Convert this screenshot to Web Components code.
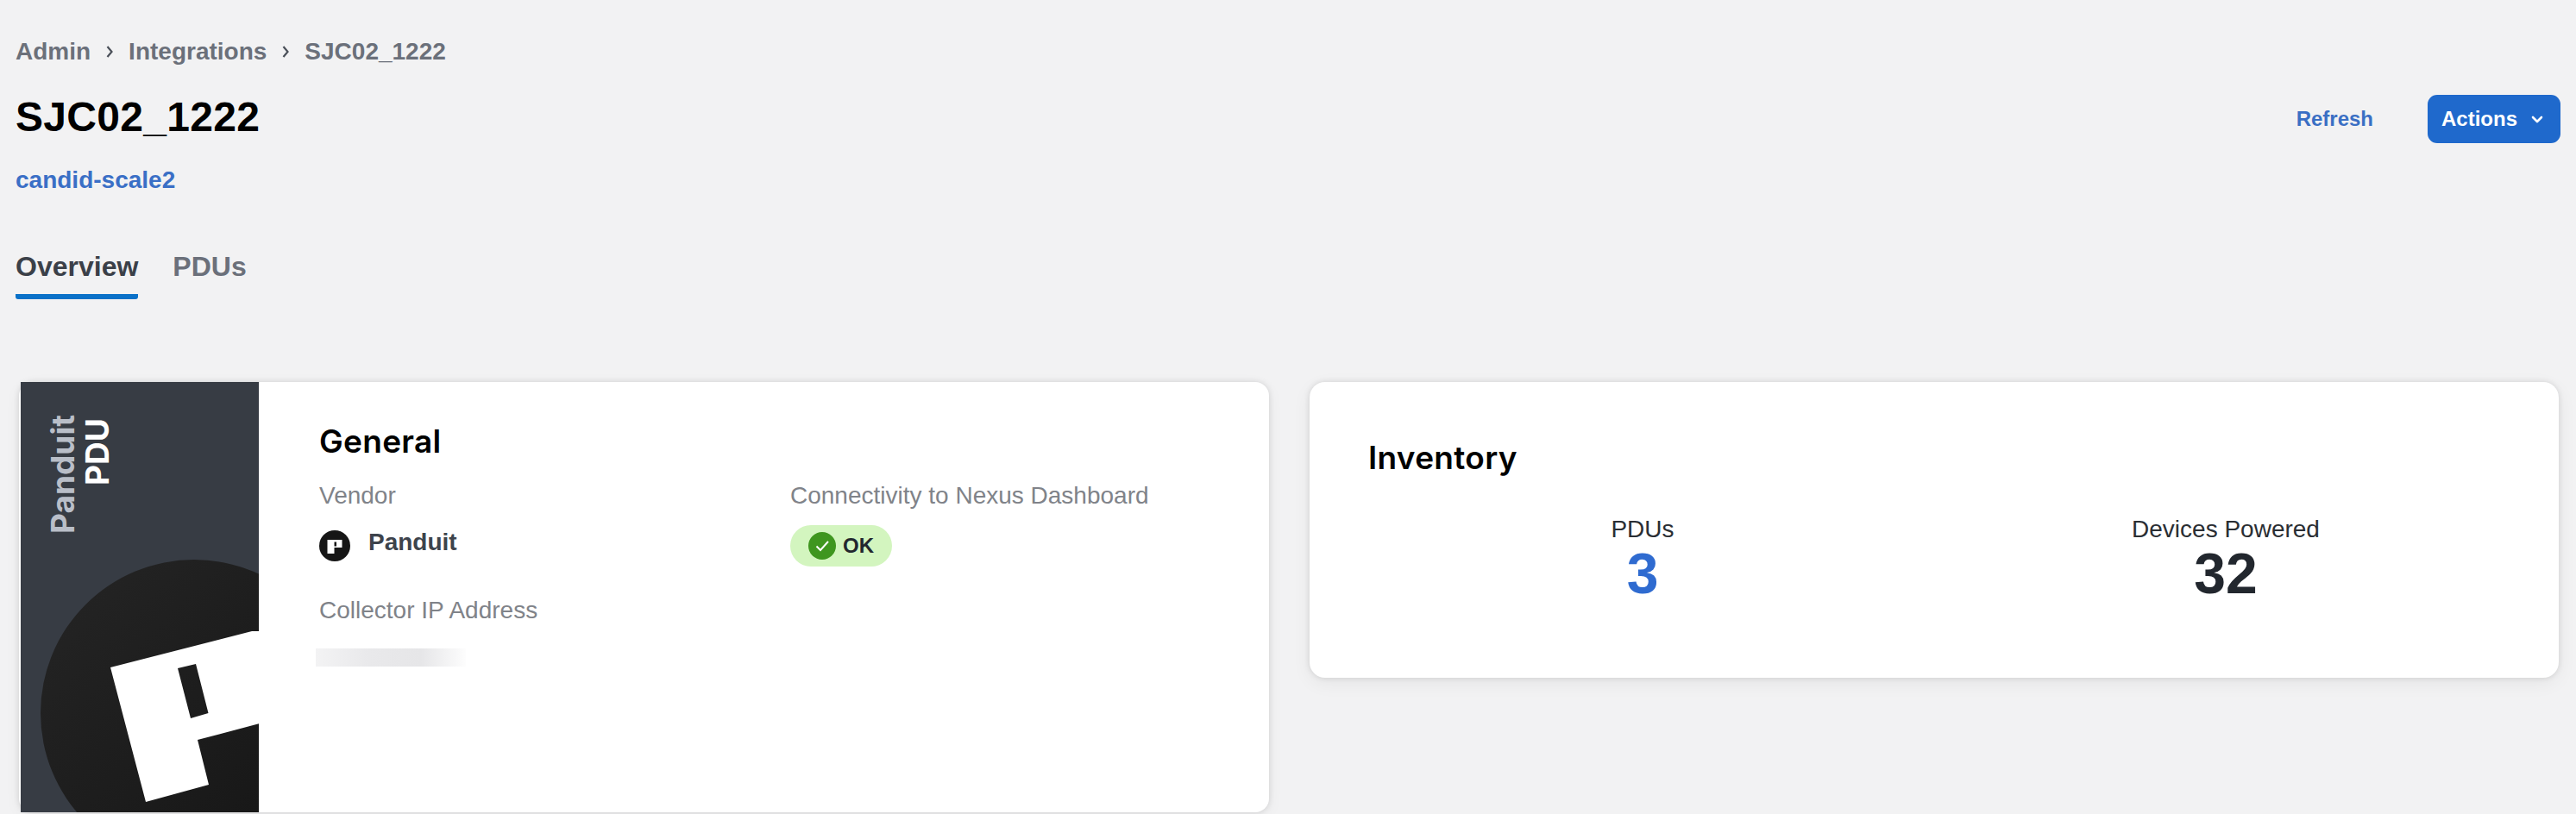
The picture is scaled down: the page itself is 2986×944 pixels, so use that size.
<!DOCTYPE html>
<html lang="en">
<head>
<meta charset="utf-8">
<title>SJC02_1222</title>
<style>
  html, body { margin: 0; background: #f2f2f3; }
  body { font-family: "Liberation Sans", Arial, sans-serif; overflow: hidden; }
</style>
</head>
<body>
<integration-page>
  <bread-crumbs slot="crumbs">
    <span>Admin</span>
    <span>Integrations</span>
    <span>SJC02_1222</span>
  </bread-crumbs>
  <page-header slot="header" heading="SJC02_1222" fabric="candid-scale2"></page-header>
  <tab-strip slot="tabs">
    <span class="active">Overview</span>
    <span>PDUs</span>
  </tab-strip>
  <general-card slot="left"></general-card>
  <inventory-card slot="right"></inventory-card>
</integration-page>

<script>
class IntegrationPage extends HTMLElement {
  connectedCallback() {
    this.attachShadow({ mode: 'open' });
    this.shadowRoot.innerHTML = `
      <style>
        :host {
          display: block;
          height: 944px;
          box-sizing: border-box;
          padding: 44px 18px 0;
          overflow: hidden;
        }
        .cards {
          display: grid;
          grid-template-columns: 1449px 1448px;
          gap: 47px;
          margin: 96px 0 0 4px;
          align-items: start;
        }
      </style>
      <slot name="crumbs"></slot>
      <slot name="header"></slot>
      <slot name="tabs"></slot>
      <div class="cards">
        <slot name="left"></slot>
        <slot name="right"></slot>
      </div>
    `;
  }
}

class BreadCrumbs extends HTMLElement {
  connectedCallback() {
    this.attachShadow({ mode: 'open' });
    const sep = `<svg width="8" height="14" viewBox="0 0 8 14" fill="none" stroke="#4b5059" stroke-width="2.2"><path d="M1.5 1l5 6-5 6"/></svg>`;
    // one separator between each pair of crumbs
    const parts = [...this.children].map((el, i) => {
      el.slot = 'c' + i;
      return `<slot name="c${i}"></slot>`;
    });
    this.shadowRoot.innerHTML = `
      <style>
        :host {
          display: flex;
          align-items: center;
          height: 32px;
          font: bold 28px/32px "Liberation Sans", Arial, sans-serif;
          color: #6b707a;
        }
        svg { margin: 0 18px; flex-shrink: 0; }
      </style>
      ${parts.join(sep)}
    `;
  }
}

class PageHeader extends HTMLElement {
  connectedCallback() {
    this.attachShadow({ mode: 'open' });
    this.shadowRoot.innerHTML = `
      <style>
        :host {
          display: flex;
          justify-content: space-between;
          align-items: flex-start;
          margin-top: 32px;
          font-family: "Liberation Sans", Arial, sans-serif;
        }
        h1 { margin: 0; font-size: 48px; line-height: 56px; font-weight: bold; letter-spacing: .3px; color: #000; }
        .fabric {
          display: block;
          margin-top: 29px;
          font-size: 28px;
          line-height: 32px;
          font-weight: bold;
          color: #3a6fc6;
        }
        .actions { display: flex; align-items: center; gap: 63px; margin-top: 2px; }
        .refresh { font-size: 24px; font-weight: bold; color: #3a6fc4; }
        button {
          display: flex;
          align-items: center;
          gap: 16px;
          width: 154px;
          height: 56px;
          padding: 0 0 0 16px;
          border: 0;
          border-radius: 11px;
          background: #1f69cc;
          color: #fff;
          font: bold 24px "Liberation Sans", Arial, sans-serif;
        }
      </style>
      <div>
        <h1>${this.getAttribute('heading')}</h1>
        <span class="fabric">${this.getAttribute('fabric')}</span>
      </div>
      <div class="actions">
        <span class="refresh">Refresh</span>
        <button>Actions
          <svg width="14" height="9" viewBox="0 0 14 9" fill="none" stroke="#fff" stroke-width="2.6" stroke-linecap="round" stroke-linejoin="round"><path d="M2 2l5 5 5-5"/></svg>
        </button>
      </div>
    `;
  }
}

class TabStrip extends HTMLElement {
  connectedCallback() {
    this.attachShadow({ mode: 'open' });
    const tabs = [...this.children].map((el, i) => {
      el.slot = 't' + i;
      const on = el.classList.contains('active') ? ' on' : '';
      return `<div class="tab${on}"><slot name="t${i}"></slot></div>`;
    });
    this.shadowRoot.innerHTML = `
      <style>
        :host {
          display: flex;
          gap: 40px;
          margin-top: 65px;
          font: bold 32px/38px "Liberation Sans", Arial, sans-serif;
          color: #6b707a;
        }
        .tab { height: 57px; box-sizing: border-box; }
        .on { color: #3b4048; border-bottom: 6px solid #0a71c8; border-radius: 3px; padding-bottom: 13px; }
      </style>
      ${tabs.join('')}
    `;
  }
}

class PanduitMark extends HTMLElement {
  connectedCallback() {
    this.attachShadow({ mode: 'open' });
    this.shadowRoot.innerHTML = `
      <style>
        :host { display: block; width: 36px; height: 36px; flex-shrink: 0; }
        svg { display: block; }
      </style>
      <svg width="36" height="36" viewBox="0 0 36 36">
        <circle cx="18" cy="18" r="18" fill="#161616"/>
        <path fill-rule="evenodd" fill="#fff" d="M9.5 11H26.5V20H17.5V27H9.5ZM17.5 13.5V18.5H20V13.5Z"/>
      </svg>
    `;
  }
}

class InfoField extends HTMLElement {
  connectedCallback() {
    this.attachShadow({ mode: 'open' });
    this.shadowRoot.innerHTML = `
      <style>
        :host { display: block; font-family: "Liberation Sans", Arial, sans-serif; }
        .label { font-size: 28px; line-height: 32px; color: #808389; }
      </style>
      <div class="label">${this.getAttribute('label')}</div>
      <slot></slot>
    `;
  }
}

class StatusPill extends HTMLElement {
  connectedCallback() {
    this.attachShadow({ mode: 'open' });
    this.shadowRoot.innerHTML = `
      <style>
        :host {
          display: inline-flex;
          align-items: center;
          gap: 8px;
          height: 48px;
          padding: 0 21px 0 21px;
          border-radius: 24px;
          background: #d3f5bf;
          color: #22272e;
          font: bold 24px "Liberation Sans", Arial, sans-serif;
        }
        svg { display: block; }
      </style>
      <svg width="32" height="32" viewBox="0 0 32 32">
        <circle cx="16" cy="16" r="16" fill="#3f961f"/>
        <path d="M9.5 16.5l4.5 4.5 9-10" fill="none" stroke="#fff" stroke-width="2"/>
      </svg>
      <slot></slot>
    `;
  }
}

class GeneralCard extends HTMLElement {
  connectedCallback() {
    this.attachShadow({ mode: 'open' });
    this.shadowRoot.innerHTML = `
      <style>
        :host {
          display: flex;
          height: 499px;
          box-sizing: border-box;
          padding-left: 2px;
          border-radius: 16px;
          background: #fff;
          box-shadow: 0 0 7px rgba(0,0,0,.12), 0 4px 18px rgba(0,0,0,.05);
          font-family: "Liberation Sans", Arial, sans-serif;
        }
        .panel {
          position: relative;
          flex: 0 0 276px;
          box-sizing: border-box;
          background: #373c44;
          overflow: hidden;
        }
        .panel svg { position: absolute; left: 0; top: 0; }
        .brand {
          position: absolute;
          left: 29px;
          top: 42px;
          height: 134px;
          writing-mode: vertical-rl;
          transform: rotate(180deg);
          text-align: end;
          font: 700 37px/40px Inter, sans-serif;
          color: #b9bec8;
        }
        .brand b { display: block; font-weight: 700; color: #fff; }
        .body { flex: 1; padding: 47px 0 0 70px; }
        h2 { margin: 0 0 25px; font: 600 37px/44px Inter, sans-serif; letter-spacing: .3px; color: #000; }
        .grid { display: grid; grid-template-columns: 546px 1fr; row-gap: 35px; }
        .vendor {
          display: flex;
          gap: 21px;
          margin-top: 22px;
          font-size: 28px;
          line-height: 32px;
          font-weight: bold;
          color: #3d434c;
        }
        .vendor panduit-mark { margin-top: 2px; }
        .pill { margin-top: 18px; }
        .masked {
          width: 174px;
          height: 21px;
          margin: 28px 0 0 -4px;
          background: linear-gradient(90deg, #f3f3f4, #e9e9eb 35%, #e6e6e8 70%, #fdfdfd);
        }
      </style>
      <div class="panel">
        <svg width="276" height="499" viewBox="24 443 276 499">
          <defs>
            <linearGradient id="disc" x1="0" y1="0" x2="1" y2="1">
              <stop offset="0" stop-color="#252525"/>
              <stop offset="1" stop-color="#141414"/>
            </linearGradient>
          </defs>
          <circle cx="225" cy="827" r="178" fill="url(#disc)"/>
          <path fill="#fff" fill-rule="evenodd" d="M128 774L292 732L320 732L320 834L229 858L242 910L169 930zM206 775L227 770L241.5 827L221 833z"/>
        </svg>
        <div class="brand">Panduit<b>PDU</b></div>
      </div>
      <div class="body">
        <h2>General</h2>
        <div class="grid">
          <info-field label="Vendor">
            <div class="vendor"><panduit-mark></panduit-mark><span>Panduit</span></div>
          </info-field>
          <info-field label="Connectivity to Nexus Dashboard">
            <div class="pill"><status-pill>OK</status-pill></div>
          </info-field>
          <info-field label="Collector IP Address">
            <div class="masked"></div>
          </info-field>
        </div>
      </div>
    `;
  }
}

class StatTile extends HTMLElement {
  connectedCallback() {
    this.attachShadow({ mode: 'open' });
    this.shadowRoot.innerHTML = `
      <style>
        :host {
          display: block;
          text-align: center;
          font-family: "Liberation Sans", Arial, sans-serif;
        }
        .label { font-size: 28px; line-height: 32px; color: #2a2e33; }
        .value {
          margin-top: 2px;
          font-size: 66px;
          line-height: 66px;
          font-weight: bold;
          color: var(--stat-color, #22272e);
        }
      </style>
      <div class="label">${this.getAttribute('label')}</div>
      <div class="value">${this.getAttribute('value')}</div>
    `;
  }
}

class InventoryCard extends HTMLElement {
  connectedCallback() {
    this.attachShadow({ mode: 'open' });
    this.shadowRoot.innerHTML = `
      <style>
        :host {
          display: block;
          height: 343px;
          box-sizing: border-box;
          padding: 66px 48px 0 68px;
          border-radius: 18px;
          background: #fff;
          box-shadow: 0 0 7px rgba(0,0,0,.12), 0 6px 22px rgba(0,0,0,.06);
        }
        h2 { margin: 0 0 45px; font: 600 37px/44px Inter, sans-serif; letter-spacing: .3px; color: #000; }
        .stats { display: grid; grid-template-columns: 1fr 1fr; margin-left: -20px; }
        .link { --stat-color: #2f6bd0; }
      </style>
      <h2>Inventory</h2>
      <div class="stats">
        <stat-tile class="link" label="PDUs" value="3"></stat-tile>
        <stat-tile label="Devices Powered" value="32"></stat-tile>
      </div>
    `;
  }
}

customElements.define('panduit-mark', PanduitMark);
customElements.define('info-field', InfoField);
customElements.define('status-pill', StatusPill);
customElements.define('stat-tile', StatTile);
customElements.define('bread-crumbs', BreadCrumbs);
customElements.define('page-header', PageHeader);
customElements.define('tab-strip', TabStrip);
customElements.define('general-card', GeneralCard);
customElements.define('inventory-card', InventoryCard);
customElements.define('integration-page', IntegrationPage);
</script>
</body>
</html>
